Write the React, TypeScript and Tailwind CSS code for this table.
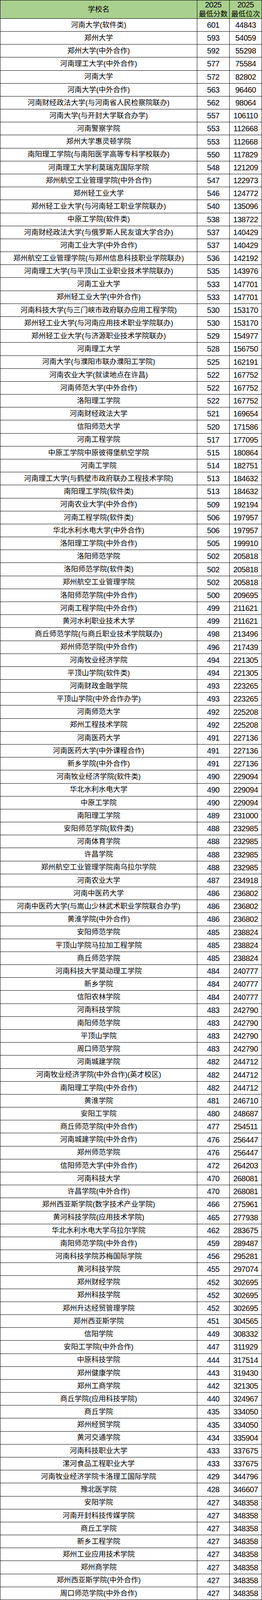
const data = `河南大学(软件类)|601|44843
郑州大学|593|54059
郑州大学(中外合作)|592|55298
河南理工大学(中外合作)|577|75584
河南大学|572|82802
河南大学(中外合作)|563|96460
河南财经政法大学(与河南省人民检察院联办)|562|98064
河南大学(与开封大学联合办学)|557|106110
河南警察学院|553|112668
郑州大学惠灵顿学院|553|112668
南阳理工学院(与南阳医学高等专科学校联办)|550|117829
河南理工大学利莫瑞克国际学院|548|121209
郑州航空工业管理学院(中外合作)|547|122973
郑州轻工业大学|546|124772
郑州轻工业大学(与河南轻工职业学院联办)|540|135096
中原工学院(软件类)|538|138722
河南财经政法大学(与俄罗斯人民友谊大学合办)|537|140429
河南工业大学(中外合作)|537|140429
郑州航空工业管理学院(与郑州信息科技职业学院联办)|536|142192
河南理工大学(与平顶山工业职业技术学院联办)|535|143976
河南工业大学|533|147701
郑州轻工业大学(中外合作)|533|147701
河南科技大学(与三门峡市政府联办应用工程学院)|530|153170
郑州轻工业大学(与河南应用技术职业学院联办)|530|153170
郑州轻工业大学(与济源职业技术学院联办)|529|154977
河南理工大学|528|156750
河南大学(与濮阳市联办濮阳工学院)|525|162191
河南农业大学(就读地点在许昌)|522|167752
河南师范大学(中外合作)|522|167752
洛阳理工学院|522|167752
河南财经政法大学|521|169654
信阳师范大学|520|171586
河南工程学院|517|177095
中原工学院中原彼得堡航空学院|515|180864
河南工学院|514|182751
河南理工大学(与鹤壁市政府联办工程技术学院)|513|184632
南阳理工学院(软件类)|513|184632
河南农业大学(中外合作)|509|192194
河南工程学院(软件类)|506|197957
华北水利水电大学(中外合作)|506|197957
洛阳理工学院(中外合作)|505|199910
洛阳师范学院|502|205818
洛阳师范学院(软件类)|502|205818
郑州航空工业管理学院|502|205818
洛阳师范学院(中外合作)|500|209695
河南工程学院(中外合作)|499|211621
黄河水利职业技术大学|499|211621
商丘师范学院(与商丘职业技术学院联办)|498|213496
郑州师范学院(中外合作)|496|217439
河南牧业经济学院|494|221305
平顶山学院(软件类)|494|221305
河南财政金融学院|493|223265
平顶山学院(中外合作办学)|493|223265
河南师范大学|492|225208
郑州工程技术学院|492|225208
河南医药大学|491|227136
河南医药大学(中外课程合作)|491|227136
新乡学院(中外合作)|491|227136
河南牧业经济学院(软件类)|490|229094
华北水利水电大学|490|229094
中原工学院|490|229094
南阳理工学院|489|231000
安阳师范学院(软件类)|488|232985
河南体育学院|488|232985
许昌学院|488|232985
郑州航空工业管理学院南乌拉尔学院|488|232985
河南农业大学|487|234918
河南中医药大学|486|236802
河南中医药大学(与嵩山少林武术职业学院联合办学)|486|236802
黄淮学院(中外合作)|486|236802
安阳师范学院|485|238824
平顶山学院马拉加工程学院|485|238824
商丘师范学院|485|238824
河南科技大学莫动理工学院|484|240777
新乡学院|484|240777
信阳农林学院|484|240777
河南科技学院|483|242790
南阳师范学院|483|242790
平顶山学院|483|242790
周口师范学院|483|242790
河南城建学院|482|244712
河南牧业经济学院(中外合作)(英才校区)|482|244712
南阳理工学院(中外合作)|482|244712
黄淮学院|481|246710
安阳工学院|480|248687
商丘师范学院(中外合作)|477|254511
河南城建学院(中外合作)|476|256447
郑州师范学院|476|256447
信阳师范大学(中外合作)|472|264203
河南科技大学|470|268081
许昌学院(中外合作)|470|268081
郑州西亚斯学院(数字技术产业学院)|466|275961
黄河科技学院(应用技术学院)|465|277938
华北水利水电大学乌拉尔学院|462|283675
南阳师范学院(中外合作)|459|289487
河南科技学院苏梅国际学院|456|295281
黄河科技学院|455|297074
郑州财经学院|452|302695
郑州科技学院|452|302695
郑州升达经贸管理学院|452|302695
郑州西亚斯学院|451|304565
信阳学院|449|308332
安阳工学院(中外合作)|447|311929
中原科技学院|444|317514
郑州健康学院|443|319430
郑州工商学院|442|321305
商丘学院(应用科技学院)|440|324967
商丘学院|435|334050
郑州经贸学院|435|334050
黄河交通学院|434|335904
河南科技职业大学|433|337675
漯河食品工程职业大学|433|337675
河南牧业经济学院卡洛理工国际学院|429|344796
豫北医学院|428|346607
安阳学院|427|348358
河南开封科技传媒学院|427|348358
商丘工学院|427|348358
新乡工程学院|427|348358
郑州工业应用技术学院|427|348358
郑州商学院|427|348358
郑州西亚斯学院(中外合作)|427|348358
周口师范学院(中外合作)|427|348358`
  .split("\n")
  .map((line) => line.split("|"))

const cjk = "font-['Liberation_Sans','Noto_Sans_CJK_SC',sans-serif]"
const cell = "min-h-0 bg-white flex items-center justify-center overflow-hidden whitespace-nowrap leading-none"
const num = "text-[20px] tracking-[-0.5px]"

export default function App() {
  // black background + 1px gaps draw the grid lines; rows share the window height
  return (
    <div
      className={`grid h-screen w-max grid-cols-[504px_82px_82px] grid-rows-[47fr_repeat(122,33fr)] gap-px p-px bg-black text-black ${cjk}`}
    >
      <div className="min-h-0 bg-[#a9d08e] flex items-center justify-center text-[18.5px]">学校名</div>
      <div className="min-h-0 bg-[#a9d08e] flex flex-col items-center justify-center text-[18.5px] leading-[23px]">
        <span className={num}>2025</span>
        <span className="whitespace-nowrap">最低分数</span>
      </div>
      <div className="min-h-0 bg-[#a9d08e] flex flex-col items-center justify-center text-[18.5px] leading-[23px]">
        <span className={num}>2025</span>
        <span className="whitespace-nowrap">最低位次</span>
      </div>
      {data.map(([name, score, rank], i) => [
        <div key={`n${i}`} className={`${cell} text-[18.5px]`}>
          {name}
        </div>,
        <div key={`s${i}`} className={`${cell} ${num}`}>
          {score}
        </div>,
        <div key={`r${i}`} className={`${cell} ${num}`}>
          {rank}
        </div>,
      ])}
    </div>
  )
}
